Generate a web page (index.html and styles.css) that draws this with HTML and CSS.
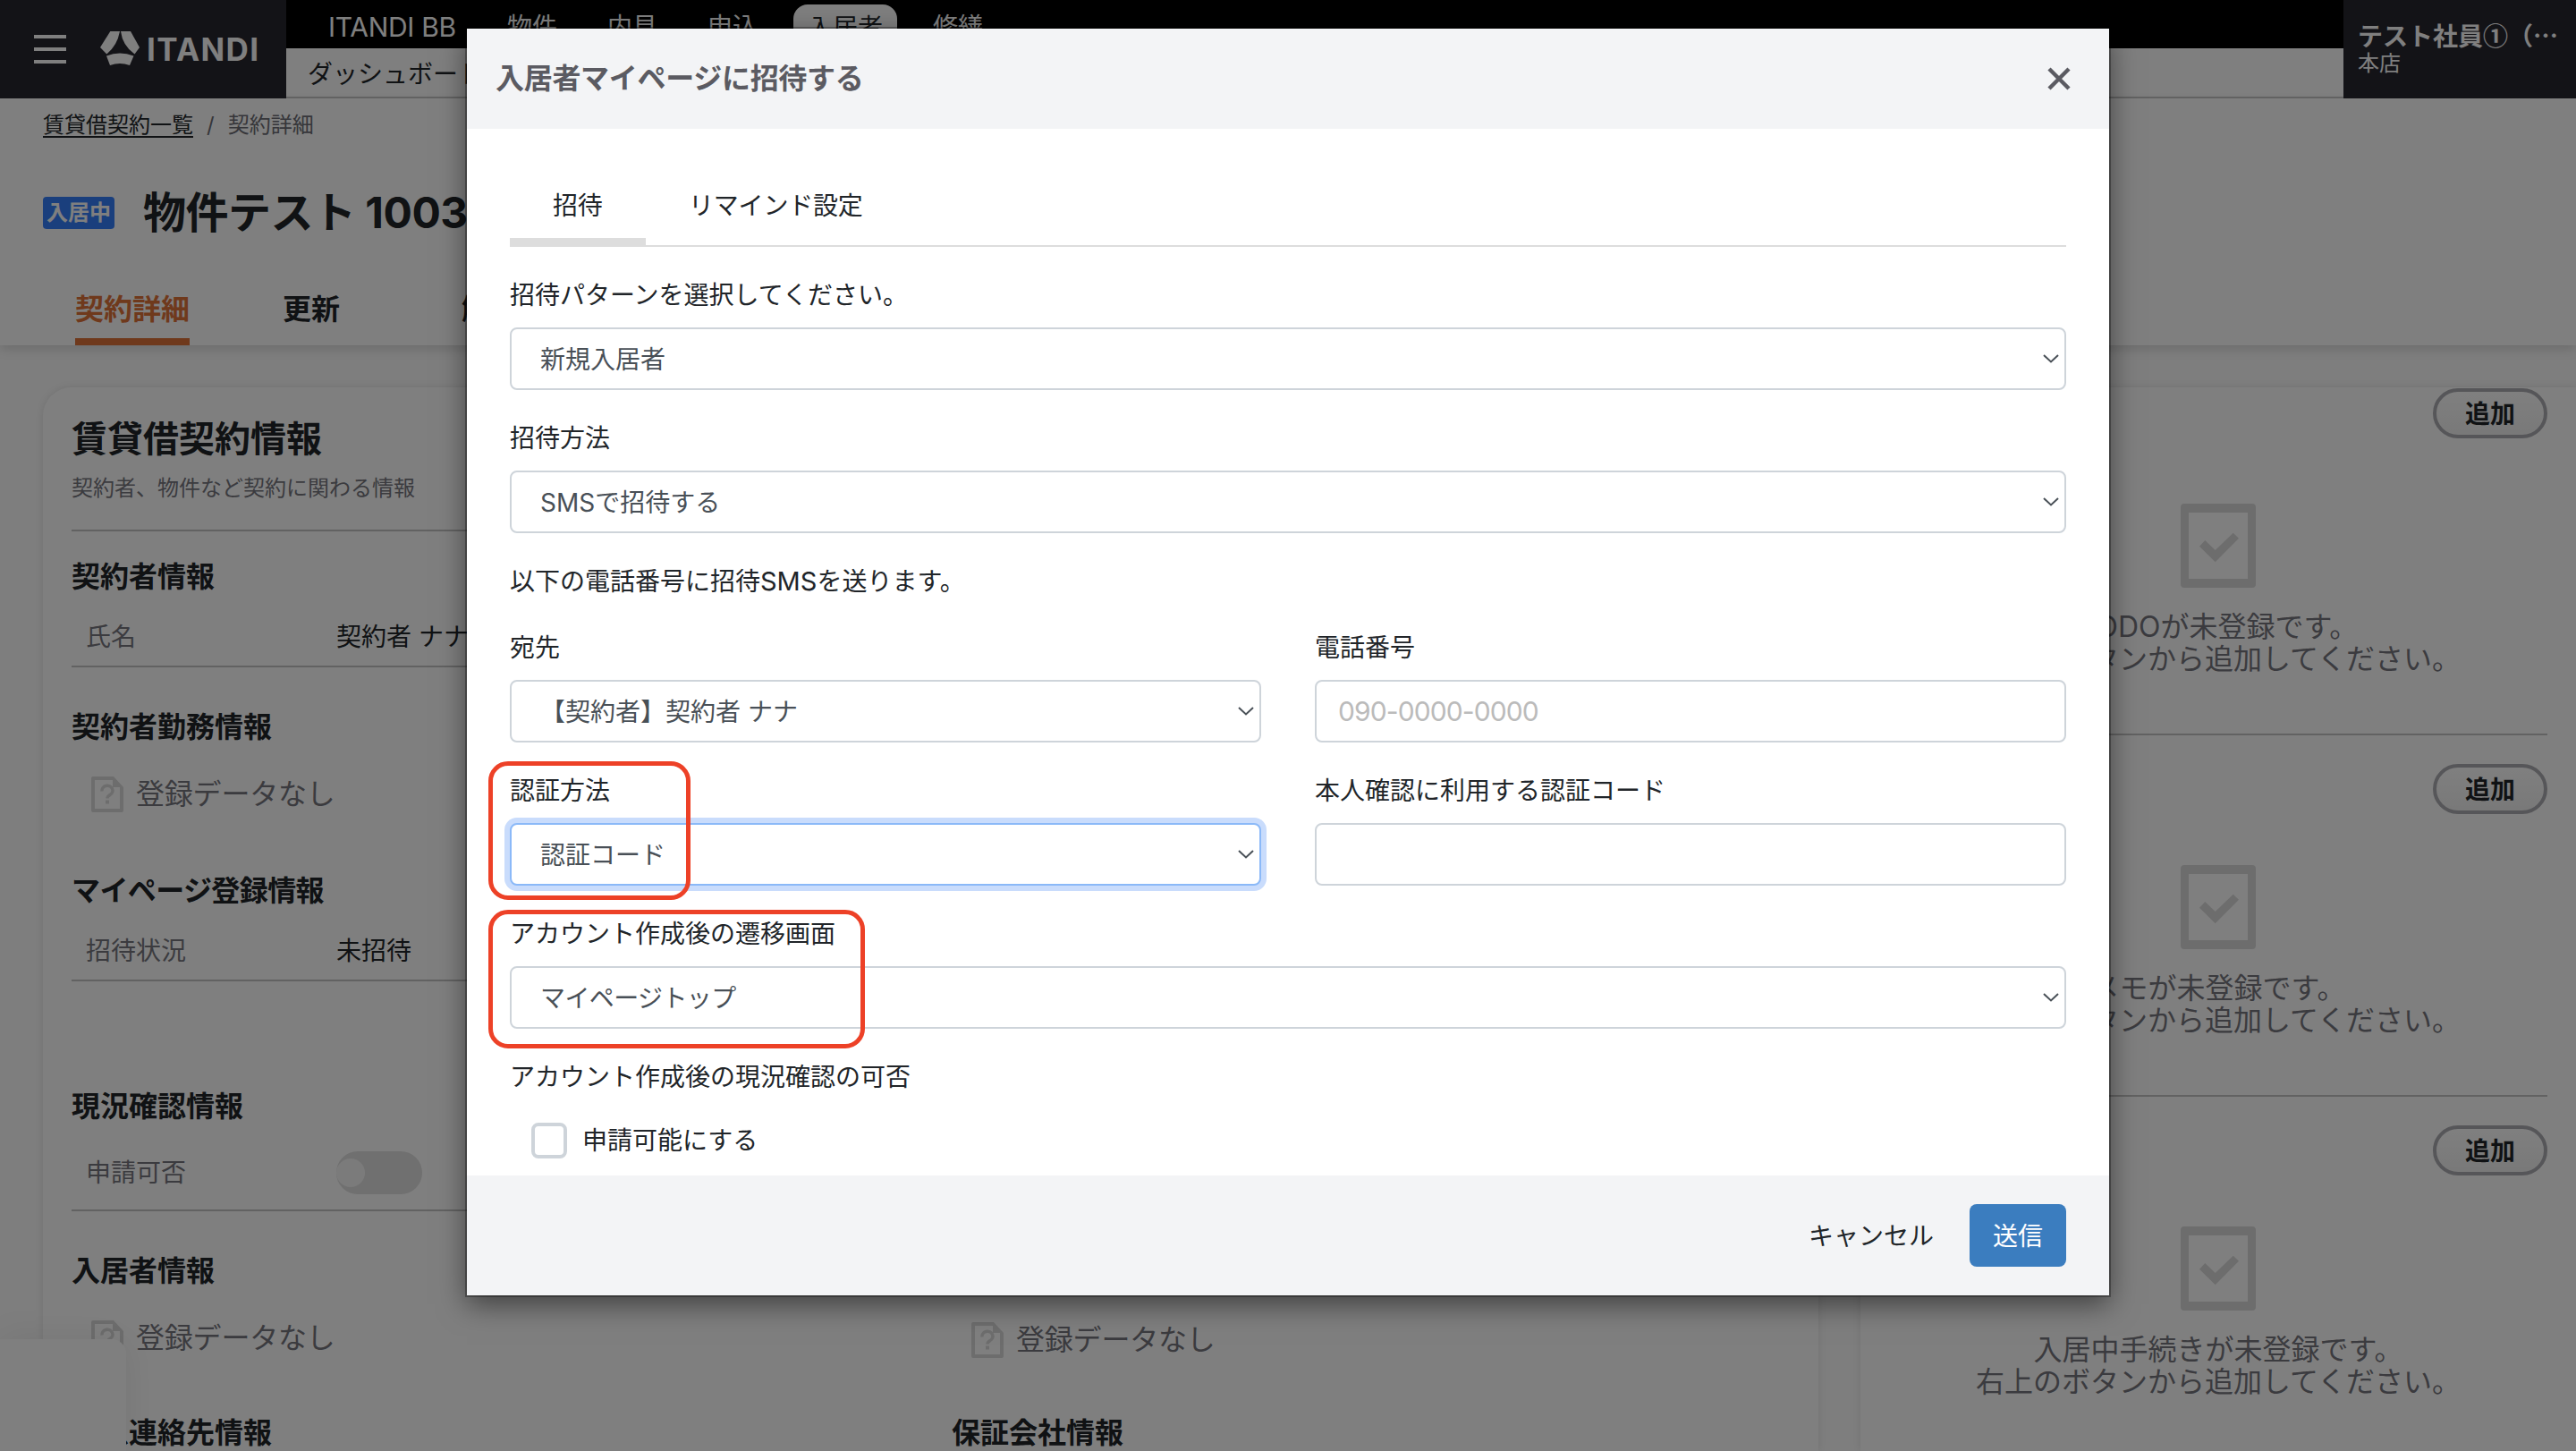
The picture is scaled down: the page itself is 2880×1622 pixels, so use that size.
FILE: index.html
```html
<!DOCTYPE html>
<html lang="ja">
<head>
    <meta charset="UTF-8">
    <meta name="viewport" content="width=device-width, initial-scale=1.0">
    <title>契約詳細 | ITANDI</title>
    <link rel="stylesheet" href="styles.css">
</head>
<body>
    <svg width="0" height="0" class="defs">
        <symbol id="icon-nodata" viewBox="0 0 36 40">
            <path fill-rule="evenodd" d="M2 0H25L36 12V38a2 2 0 0 1-2 2H2a2 2 0 0 1-2-2V2a2 2 0 0 1 2-2zM4 4V36H32V12H24V4z"/>
            <path d="M12 16.500a6 5.500 0 1 1 9 4c-2 1.300-3 2-3 4" fill="none" stroke="currentColor" stroke-width="3.500"/>
            <path d="M16 26.500h4v4h-4z"/>
        </symbol>
        <symbol id="icon-check" viewBox="0 0 84 94">
            <path fill-rule="evenodd" d="M4 0H80a4 4 0 0 1 4 4V90a4 4 0 0 1-4 4H4a4 4 0 0 1-4-4V4a4 4 0 0 1 4-4zM9 10V84H75V10z"/>
            <path d="M21 47.700L27.300 41L38.700 52L58.700 32.700L65 38.700L38.700 65.300z"/>
        </symbol>
        <symbol id="icon-chevron" viewBox="0 0 18 10">
            <path d="M1 1L9 8.500L17 1" fill="none" stroke="currentColor" stroke-width="2"/>
        </symbol>
    </svg>

    <header class="header">
        <div class="brand">
            <div class="menu"><span></span><span></span><span></span></div>
            <svg class="logo" width="186" height="40" viewBox="0 0 186 40">
                <path d="M11.300 1H22Q19 17 7.300 26.500L0 19z"/>
                <path d="M23 1H34L44 19L38.500 26.500Q25 17 23 1z"/>
                <path d="M7 28.500Q22 22.500 37.500 28.500L33 39Q22 35 11 39z"/>
                <text x="52" y="33.500" textLength="125" lengthAdjust="spacing">ITANDI</text>
            </svg>
        </div>
        <div class="header-center">
            <nav class="nav">
                <a class="latin">ITANDI BB</a>
                <a>物件</a>
                <a>内見</a>
                <a>申込</a>
                <a class="current">入居者</a>
                <a>修繕</a>
            </nav>
            <div class="subnav">ダッシュボード</div>
        </div>
        <div class="user">
            <div class="user-name">テスト社員①（…</div>
            <div class="user-branch">本店</div>
        </div>
    </header>

    <section class="page-head">
        <div class="breadcrumb"><a>賃貸借契約一覧</a><span>/</span><span>契約詳細</span></div>
        <div class="title-row">
            <span class="badge">入居中</span>
            <h1>物件テスト 1003</h1>
        </div>
        <div class="page-tabs">
            <a class="active">契約詳細</a>
            <a>更新</a>
            <a>解約</a>
        </div>
    </section>

    <main class="content">
        <section class="card">
            <h2>賃貸借契約情報</h2>
            <p class="lead">契約者、物件など契約に関わる情報</p>
            <hr>
            <div class="columns">
                <div>
                    <h3 class="first">契約者情報</h3>
                    <div class="row"><span>氏名</span><b>契約者 ナナ</b></div>
                    <h3>契約者勤務情報</h3>
                    <div class="nodata"><svg><use href="#icon-nodata"/></svg>登録データなし</div>
                    <h3 class="after-nodata tight">マイページ登録情報</h3>
                    <div class="row"><span>招待状況</span><b>未招待</b></div>
                    <h3 class="spaced">現況確認情報</h3>
                    <div class="row tall"><span>申請可否</span><i class="toggle"></i></div>
                </div>
                <div></div>
                <div>
                    <h3>入居者情報</h3>
                    <div class="nodata"><svg><use href="#icon-nodata"/></svg>登録データなし</div>
                </div>
                <div class="guarantor">
                    <div class="nodata"><svg><use href="#icon-nodata"/></svg>登録データなし</div>
                </div>
                <h3 class="last">緊急連絡先情報</h3>
                <h3 class="last">保証会社情報</h3>
            </div>
        </section>

        <aside class="card side">
            <section>
                <button class="add">追加</button>
                <svg><use href="#icon-check"/></svg>
                <p>TODOが未登録です。<br>右上のボタンから追加してください。</p>
            </section>
            <section>
                <button class="add">追加</button>
                <svg><use href="#icon-check"/></svg>
                <p>メモが未登録です。<br>右上のボタンから追加してください。</p>
            </section>
            <section>
                <button class="add">追加</button>
                <svg><use href="#icon-check"/></svg>
                <p>入居中手続きが未登録です。<br>右上のボタンから追加してください。</p>
            </section>
        </aside>
    </main>
    <div class="corner-panel"></div>

    <div class="backdrop">
        <div class="modal">
            <div class="modal-header">
                <h4>入居者マイページに招待する</h4>
                <svg width="26" height="26" viewBox="0 0 26 26"><path d="M2 2L24 24M24 2L2 24"/></svg>
            </div>
            <div class="modal-body">
                <div class="tabs">
                    <a class="active">招待</a>
                    <a>リマインド設定</a>
                </div>
                <div class="field">
                    <label>招待パターンを選択してください。</label>
                    <div class="select"><select><option>新規入居者</option></select><svg><use href="#icon-chevron"/></svg></div>
                </div>
                <div class="field">
                    <label>招待方法</label>
                    <div class="select"><select><option>SMSで招待する</option></select><svg><use href="#icon-chevron"/></svg></div>
                </div>
                <p class="note">以下の電話番号に招待<span class="latin">SMS</span>を送ります。</p>
                <div class="pair">
                    <div class="field">
                        <label>宛先</label>
                        <div class="select"><select><option>【契約者】契約者 ナナ</option></select><svg><use href="#icon-chevron"/></svg></div>
                    </div>
                    <div class="field">
                        <label>電話番号</label>
                        <input type="text" placeholder="090-0000-0000">
                    </div>
                </div>
                <div class="pair">
                    <div class="field">
                        <label>認証方法</label>
                        <div class="select focused"><select><option>認証コード</option></select><svg><use href="#icon-chevron"/></svg></div>
                    </div>
                    <div class="field">
                        <label>本人確認に利用する認証コード</label>
                        <input type="text">
                    </div>
                </div>
                <div class="field">
                    <label>アカウント作成後の遷移画面</label>
                    <div class="select"><select class="tight"><option>マイページトップ</option></select><svg><use href="#icon-chevron"/></svg></div>
                </div>
                <div class="field">
                    <label>アカウント作成後の現況確認の可否</label>
                    <div class="checkbox"><input type="checkbox">申請可能にする</div>
                </div>
            </div>
            <div class="modal-footer">
                <button class="cancel">キャンセル</button>
                <button class="submit">送信</button>
            </div>
            <div class="mark mark-auth"></div>
            <div class="mark mark-screen"></div>
        </div>
    </div>
</body>
</html>
```

FILE: styles.css
```css
* {
    box-sizing: border-box;
}
html {
    overflow: hidden;
}
body {
    position: relative;
    margin: 0;
    width: 2880px;
    height: 1622px;
    overflow: hidden;
    background: #fcfcfc;
    color: #212529;
    font-family: Inter, "Noto Sans CJK JP", sans-serif;
    font-size: 28px;
    line-height: 42px;
}
h1, h2, h3, h4, p {
    margin: 0;
}
button, input, select {
    font-family: inherit;
    font-size: 28px;
}
.defs {
    position: absolute;
}
.latin {
    font-size: 29px;
    line-height: 1;
}
.tight {
    letter-spacing: -0.6px;
}

/* header */
.header {
    display: flex;
    height: 110px;
    background: #fff;
}
.brand {
    display: flex;
    align-items: center;
    width: 320px;
    padding-left: 38px;
    background: #27262f;
}
.menu {
    display: flex;
    flex-direction: column;
    gap: 10px;
    width: 36px;
}
.menu span {
    height: 4px;
    background: #fff;
}
.logo {
    margin: -2px 0 0 38px;
    fill: #fff;
    overflow: visible;
}
.logo text {
    font-size: 35px;
    font-weight: 700;
}
.header-center {
    flex: 1;
    border-bottom: 2px solid #c4c4c4;
}
.nav {
    display: flex;
    align-items: center;
    gap: 56px;
    height: 54px;
    padding-left: 47px;
    background: #000;
    color: #fff;
}
.nav a {
    line-height: 48px;
    padding-top: 6px;
}
.nav .latin {
    width: 144px;
    font-size: 30px;
    letter-spacing: -0.3px;
    white-space: nowrap;
}
.nav .current {
    margin: 6px -16px 0;
    padding: 2px 16px 0;
    border-radius: 16px;
    background: #fff;
    color: #212529;
}
.subnav {
    padding-left: 24px;
    line-height: 58px;
    height: 54px;
}
.user {
    width: 260px;
    padding: 21px 16px;
    background: #27262f;
    color: #fff;
    font-family: "Noto Sans CJK JP", sans-serif;
    white-space: nowrap;
}
.user-name {
    font-weight: 700;
    line-height: 36px;
}
.user-branch {
    font-size: 24px;
    line-height: 23px;
}

/* page title and tabs */
.page-head {
    height: 276px;
    padding: 12px 48px 0;
    background: #fff;
    box-shadow: 0 4px 12px rgba(0,0,0,0.15);
}
.breadcrumb {
    display: flex;
    gap: 15px;
    font-size: 24px;
    line-height: 36px;
    color: #6c6c74;
}
.breadcrumb a {
    color: #212529;
    text-decoration: underline;
    text-underline-offset: 4px;
}
.title-row {
    display: flex;
    align-items: center;
    gap: 32px;
    height: 72px;
    margin-top: 44px;
}
.badge {
    padding: 0 4px;
    border-radius: 4px;
    background: #347ffa;
    color: #fff;
    font-size: 24px;
    font-weight: 700;
    line-height: 36px;
}
h1 {
    font-size: 48px;
    line-height: 72px;
    letter-spacing: -0.5px;
}
.page-tabs {
    display: flex;
    gap: 72px;
    margin-top: 40px;
    padding-left: 36px;
    font-size: 32px;
    font-weight: 700;
}
.page-tabs a {
    min-width: 128px;
    height: 72px;
    line-height: 64px;
    text-align: center;
}
.page-tabs .active {
    border-bottom: 8px solid #df7238;
    color: #df7238;
}

/* contract cards */
.content {
    display: flex;
    gap: 47px;
    height: 1189px;
    margin-top: 47px;
    padding-left: 48px;
}
.card {
    flex: none;
    width: 1985px;
    height: 1189px;
    padding: 34px 32px 0;
    border-radius: 32px 32px 0 0;
    background: #fff;
    box-shadow: 0 0 8px rgba(0,0,0,0.1);
}
h2 {
    font-size: 40px;
    line-height: 48px;
}
.lead {
    margin-top: 13px;
    font-size: 24px;
    line-height: 36px;
    color: #77777f;
}
.card hr {
    margin: 28px 0 0;
    border: 0;
    border-top: 2px solid #c4c4c4;
}
.columns {
    display: grid;
    grid-template-columns: 1fr 1fr;
    column-gap: 47px;
}
h3 {
    margin-top: 45px;
    font-size: 32px;
    line-height: 44px;
}
h3.first {
    margin-top: 29px;
}
h3.after-nodata {
    margin-top: 66px;
}
h3.spaced {
    margin-top: 118px;
}
h3.last {
    margin-top: 62px;
}
.row {
    display: flex;
    align-items: center;
    height: 69px;
    margin-top: 10px;
    padding: 2px 0 0 16px;
    border-bottom: 2px solid #c4c4c4;
}
.row.tall {
    height: 85px;
    padding-top: 0;
}
.row span {
    width: 280px;
    color: #77777f;
}
.row b {
    font-weight: 400;
}
.toggle {
    width: 96px;
    height: 48px;
    padding: 8px 0;
    border-radius: 24px;
    background: #e0e0e0;
}
.toggle::before {
    content: "";
    display: block;
    width: 32px;
    height: 32px;
    border-radius: 50%;
    background: #f6f6f6;
}
.nodata {
    display: flex;
    align-items: center;
    gap: 14px;
    height: 40px;
    margin-top: 33px;
    padding-left: 22px;
    font-size: 32px;
    letter-spacing: -0.2px;
    color: #77777f;
}
.nodata svg {
    width: 36px;
    height: 40px;
    color: #dadada;
    fill: #dadada;
}
.guarantor {
    padding-top: 91px;
}

/* right column */
.side {
    width: 800px;
    padding: 1px 32px 0 32px;
    border-radius: 32px 0 0 0;
}
.side section {
    display: flex;
    flex-direction: column;
    align-items: center;
    padding: 32px 0 65px;
    border-bottom: 2px solid #c4c4c4;
}
.side section:last-child {
    padding-bottom: 0;
    border-bottom: 0;
}
.side section:first-child {
    padding-top: 0;
}
.side section:first-child svg {
    margin-top: 73px;
}
.side svg {
    width: 84px;
    height: 94px;
    margin-top: 57px;
    fill: #dadada;
}
.side p {
    margin-top: 26px;
    font-size: 32px;
    line-height: 36px;
    color: #77777f;
    text-align: center;
}
.add {
    align-self: flex-end;
    width: 128px;
    height: 56px;
    padding: 0 0 3px;
    border: 4px solid #adadb2;
    border-radius: 28px;
    background: linear-gradient(#fff, #f2f2f2);
    color: #212529;
    font-weight: 700;
}
.corner-panel {
    position: absolute;
    left: 0;
    bottom: 0;
    width: 141px;
    height: 125px;
    border-radius: 0 16px 0 0;
    background: #fff;
    box-shadow: 0 0 40px rgba(0,0,0,0.08);
}

/* modal */
.backdrop {
    position: absolute;
    inset: 0;
    padding-top: 32px;
    background: rgba(0,0,0,0.5);
}
.modal {
    position: relative;
    width: 1836px;
    height: 1416px;
    margin: 0 auto;
    background: #fff;
    box-shadow: 0 0 0 2px rgba(0,0,0,0.3), 0 10px 30px rgba(0,0,0,0.5);
}
.modal-header {
    display: flex;
    align-items: center;
    justify-content: space-between;
    height: 112px;
    padding: 0 43px 0 32px;
    background: #f3f4f6;
}
.modal-header h4 {
    font-size: 32px;
    letter-spacing: -0.3px;
    color: #5b5b62;
}
.modal-header svg {
    stroke: #5b5b62;
    stroke-width: 4.500;
}
.modal-body {
    height: 1170px;
    padding: 48px 48px 0;
}
.tabs {
    display: flex;
    height: 84px;
    box-shadow: inset 0 -2px #ddd;
}
.tabs a {
    padding: 0 48px;
    line-height: 76px;
    letter-spacing: -0.2px;
}
.tabs .active {
    width: 152px;
    border-bottom: 10px solid #ddd;
}
.field {
    flex: 1;
    margin-top: 32px;
}
.field label {
    display: block;
    margin-bottom: 14px;
    line-height: 44px;
}
.note {
    margin: 32px 0 -2px;
    line-height: 44px;
}
.pair {
    display: flex;
    gap: 60px;
}
.select {
    position: relative;
}
.select select, .field input[type="text"] {
    display: block;
    width: 100%;
    height: 70px;
    padding: 2px 32px 0;
    border: 2px solid #ced4da;
    border-radius: 8px;
    outline: 0;
    background: #fff;
    color: #495057;
    appearance: none;
}
.field input[type="text"] {
    padding: 0 24px;
    font-size: 30px;
    letter-spacing: -0.9px;
}
.field input::placeholder {
    color: #bbb;
}
.select svg {
    position: absolute;
    top: 30px;
    right: 8px;
    width: 18px;
    height: 10px;
    color: #495057;
}
.focused select {
    border-color: #8bb9f8;
    box-shadow: 0 0 0 6px #c9dcfc;
}
.checkbox {
    display: flex;
    align-items: center;
    gap: 17px;
    height: 40px;
    margin: 29px 0 0 24px;
    line-height: 44px;
}
.checkbox input {
    width: 40px;
    height: 40px;
    margin: 0;
    border: 4px solid #ced4da;
    border-radius: 8px;
    appearance: none;
}
.modal-footer {
    display: flex;
    align-items: center;
    justify-content: flex-end;
    gap: 40px;
    height: 134px;
    padding-right: 48px;
    background: #f3f4f6;
}
.modal-footer button {
    padding: 0 0 2px;
    border: 0;
    background: none;
    color: #212529;
}
.modal-footer .submit {
    width: 108px;
    height: 70px;
    border-radius: 8px;
    background: #3b7dbf;
    color: #fff;
}

/* red frames round the two settings */
.mark {
    position: absolute;
    left: 24px;
    height: 155px;
    border: 5px solid #ed4127;
    border-radius: 22px;
}
.mark-auth {
    top: 819px;
    width: 226px;
}
.mark-screen {
    top: 985px;
    width: 421px;
}
```
